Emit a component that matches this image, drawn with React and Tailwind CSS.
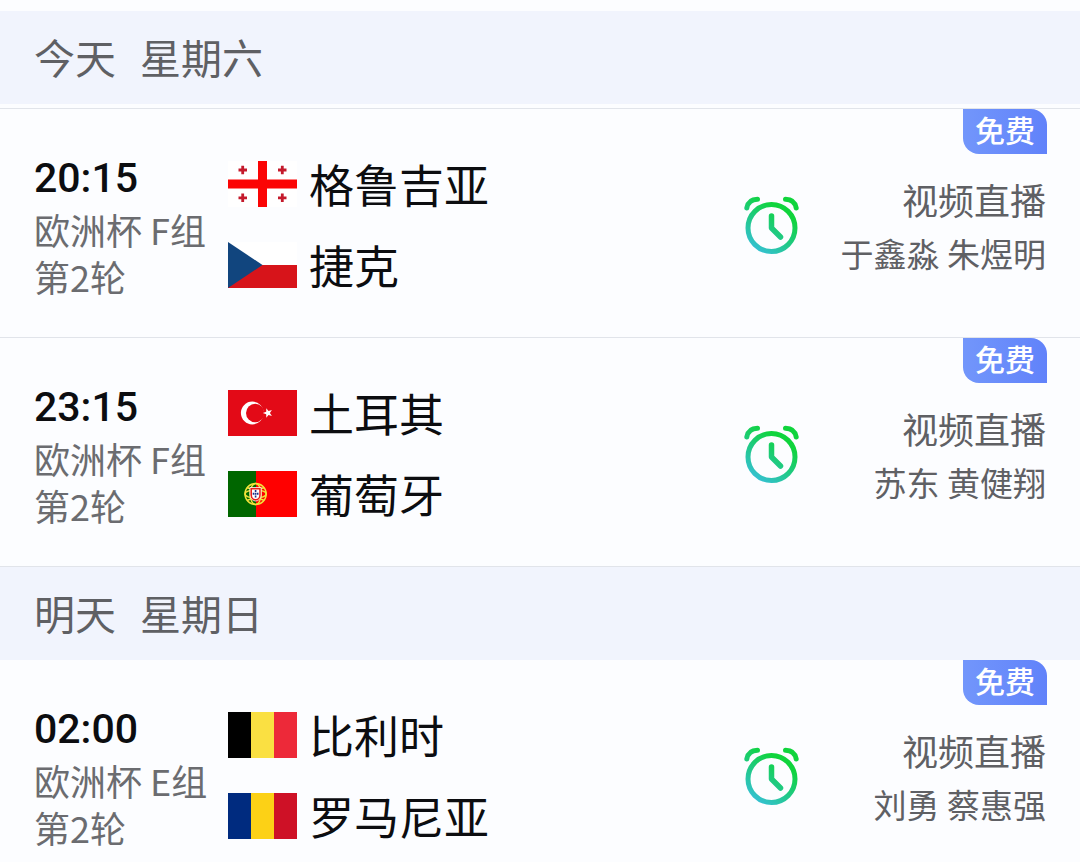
import { useId } from "react";

const days = [
  {
    day: "今天",
    weekday: "星期六",
    headerClass: "",
    listClass: "mt-1 border-t",
    matches: [
      {
        time: "20:15",
        group: "欧洲杯 F组",
        round: "第2轮",
        teams: [
          { name: "格鲁吉亚", Flag: GeorgiaFlag },
          { name: "捷克", Flag: CzechFlag },
        ],
        hosts: "于鑫淼 朱煜明",
      },
      {
        time: "23:15",
        group: "欧洲杯 F组",
        round: "第2轮",
        teams: [
          { name: "土耳其", Flag: TurkeyFlag },
          { name: "葡萄牙", Flag: PortugalFlag },
        ],
        hosts: "苏东 黄健翔",
      },
    ],
  },
  {
    day: "明天",
    weekday: "星期日",
    headerClass: "border-t",
    listClass: "",
    matches: [
      {
        time: "02:00",
        group: "欧洲杯 E组",
        round: "第2轮",
        teams: [
          { name: "比利时", Flag: BelgiumFlag },
          { name: "罗马尼亚", Flag: RomaniaFlag },
        ],
        hosts: "刘勇 蔡惠强",
      },
    ],
  },
];

function FlagBox({ children }) {
  return (
    <svg viewBox="0 0 69 46" className="w-[69px] h-[46px] shrink-0" aria-hidden="true">
      {children}
    </svg>
  );
}

function GeorgiaFlag() {
  return (
    <FlagBox>
      <rect width="69" height="46" fill="#fff" />
      <path d="M30 0h9v46h-9zM0 18.5h69v9H0z" fill="#fb0505" />
      <path
        d="M10.5 9h8.5M14.7 4.8v8.5M50 9h8.5M54.3 4.8v8.5M10.5 36.8h8.5M14.7 32.5v8.5M50 36.8h8.5M54.3 32.5v8.5"
        stroke="#c41a2c"
        strokeWidth="2.8"
      />
    </FlagBox>
  );
}

function CzechFlag() {
  return (
    <FlagBox>
      <rect width="69" height="23" fill="#fff" />
      <rect y="23" width="69" height="23" fill="#d7141a" />
      <path d="M0 0l34.5 23L0 46z" fill="#11457e" />
    </FlagBox>
  );
}

function TurkeyFlag() {
  return (
    <FlagBox>
      <rect width="69" height="46" fill="#e30a17" />
      <circle cx="24.3" cy="23" r="11.4" fill="#fff" />
      <circle cx="27.2" cy="23" r="9.2" fill="#e30a17" />
      <path
        d="M34.8 23l3.4-1.2.1-3.6 2.2 2.9 3.4-1-2 2.9 2 2.9-3.4-1-2.2 2.9-.1-3.6z"
        fill="#fff"
      />
    </FlagBox>
  );
}

function PortugalFlag() {
  return (
    <FlagBox>
      <rect width="69" height="46" fill="#ff0000" />
      <rect width="28" height="46" fill="#006600" />
      <g fill="none" stroke="#f2e23a" strokeWidth="1.5">
        <circle cx="27.6" cy="23" r="10.6" />
        <ellipse cx="27.6" cy="23" rx="10.6" ry="4" />
        <ellipse cx="27.6" cy="23" rx="5.5" ry="10.6" />
        <path d="M19 16.5q8.6 4.5 17.2 0M19 29.5q8.6-4.5 17.2 0" />
      </g>
      <path d="M22 16.5h11.2V24a5.6 6 0 0 1-11.2 0z" fill="#e8201a" stroke="#fff" strokeWidth=".8" />
      <path d="M24 18.5h7.2V24a3.6 4 0 0 1-7.2 0z" fill="#fff" />
      <path
        d="M26.8 19h1.6v2h-1.6zM24.7 21.7h1.6v2h-1.6zM26.8 21.7h1.6v2h-1.6zM28.9 21.7h1.6v2h-1.6zM26.8 24.5h1.6v2h-1.6z"
        fill="#1b2f8a"
      />
    </FlagBox>
  );
}

function BelgiumFlag() {
  return (
    <FlagBox>
      <rect width="23" height="46" fill="#000" />
      <rect x="23" width="23" height="46" fill="#fae042" />
      <rect x="46" width="23" height="46" fill="#ed2939" />
    </FlagBox>
  );
}

function RomaniaFlag() {
  return (
    <FlagBox>
      <rect width="23" height="46" fill="#002b7f" />
      <rect x="23" width="23" height="46" fill="#fcd116" />
      <rect x="46" width="23" height="46" fill="#ce1126" />
    </FlagBox>
  );
}

function AlarmIcon() {
  const id = useId();

  return (
    <svg viewBox="0 0 58 60" className="w-[58px] h-[60px]" fill="none" aria-hidden="true">
      <defs>
        <linearGradient id={id} gradientUnits="userSpaceOnUse" x1="10" y1="54" x2="38" y2="14">
          <stop offset="0" stopColor="#36c0d8" />
          <stop offset="0.55" stopColor="#1fca80" />
          <stop offset="1" stopColor="#10d43c" />
        </linearGradient>
      </defs>
      <g stroke={`url(#${id})`} strokeWidth="5" strokeLinecap="round" strokeLinejoin="round">
        <circle cx="28.5" cy="32" r="23.5" />
        <path d="M28.5 20v12l9 9" strokeWidth="5.5" />
        <path d="M14.500 3.200C8.500 3.200 4.800 6.500 3.800 12" />
        <path d="M42.500 3.200c6 0 9.700 3.300 10.700 8.800" />
      </g>
    </svg>
  );
}

function MatchRow({ match }) {
  return (
    <li className="relative px-[34px]">
      {/* FREE BADGE */}
      <span className="absolute top-0 right-[33px] w-[84px] h-[45px] pb-1.5 flex items-center justify-center rounded-tr-[16px] rounded-bl-[16px] bg-linear-to-r from-[#7296fb] to-[#6182fa] text-[30px] leading-none font-medium text-white">
        免费
      </span>

      <div className="flex items-center h-[228px] pt-1.5">
        {/* TIME + ROUND */}
        <div className="w-[194px] shrink-0 text-[36px] leading-[47px] text-[#6b6c70]">
          <time className="block mb-1 pt-0.5 font-[Roboto,sans-serif] font-medium text-[41px] leading-[48px] text-[#0c0d10]">
            {match.time}
          </time>
          <p className="whitespace-nowrap">{match.group}</p>
          <p>{match.round}</p>
        </div>

        {/* TEAMS */}
        <ul className="flex-1 flex flex-col gap-[35px] pb-1">
          {match.teams.map(({ name, Flag }) => (
            <li key={name} className="flex items-center gap-3 text-[45px] leading-[46px] text-[#0c0d10]">
              <Flag />
              {name}
            </li>
          ))}
        </ul>

        <button type="button" aria-label="预约提醒" className="shrink-0">
          <AlarmIcon />
        </button>

        {/* BROADCAST */}
        <div className="w-[245px] shrink-0 text-right leading-[54px] text-[#5f6064]">
          <p className="text-[36px]">视频直播</p>
          <p className="text-[33px]">{match.hosts}</p>
        </div>
      </div>
    </li>
  );
}

export default function App() {
  return (
    <main
      lang="zh-CN"
      className="h-screen overflow-hidden pt-[11px] bg-[#fcfdff] font-['Noto_Sans_CJK_SC',sans-serif]"
    >
      {days.map((d) => (
        <section key={d.day}>
          <h2
            className={`px-[34px] bg-[#f1f4fd] border-[#e1e4ea] text-[41px] font-normal text-[#5f6064] ${d.headerClass}`}
          >
            <span className="flex items-center gap-6 h-[93px] pb-0.5">
              <span>{d.day}</span>
              <span>{d.weekday}</span>
            </span>
          </h2>
          <ul className={`divide-y divide-[#e1e4ea] border-[#e1e4ea] ${d.listClass}`}>
            {d.matches.map((m) => (
              <MatchRow key={m.time} match={m} />
            ))}
          </ul>
        </section>
      ))}
    </main>
  );
}
